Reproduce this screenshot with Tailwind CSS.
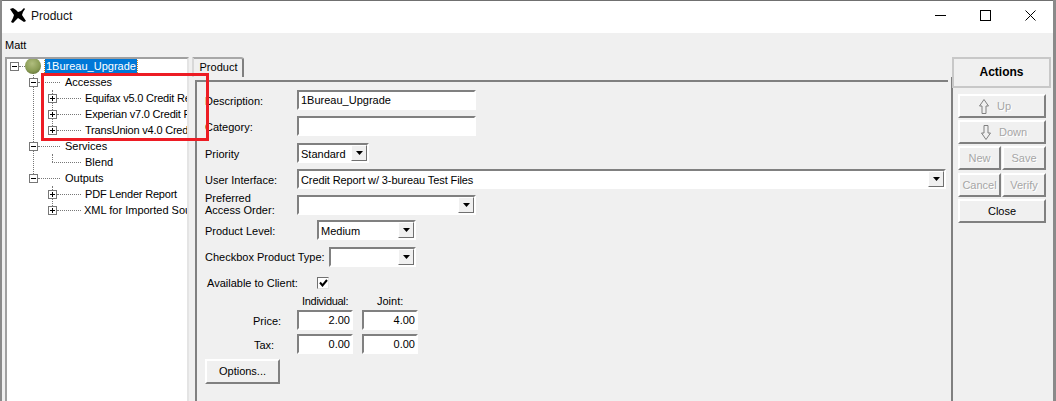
<!DOCTYPE html>
<html lang="en">
<head>
    <meta charset="UTF-8">
    <title>Product</title>
    <script src="https://cdn.jsdelivr.net/npm/@tailwindcss/browser@4"></script>
</head>
<body class="bg-[#8a8a8a] overflow-hidden">
<div class="relative w-[1056px] h-[401px] overflow-hidden font-['Liberation_Sans',Arial,sans-serif] text-[11px] leading-none text-black">
    <div class="w-[1051px] h-[401px] ml-[2px] border-t border-[#707070] bg-[#f0f0f0] flex flex-col">
        <!-- Title bar -->
        <div class="h-[32px] bg-white flex items-center shrink-0">
            <svg class="ml-[8px] -mt-[3px] w-[16px] h-[15px] shrink-0" viewBox="0 0 16 15"><path d="M0 1 3 0 6 2 8 4 11 3 14 0 15 1 13 4 12 7 14 10 16 13 14 14 11 12 8 10 6 12 3 15 1 14 3 10 4 7 2 4Z" fill="#000"/></svg>
            <span class="ml-[5px] -mt-[2px] text-[12px] text-[#111]">Product</span>
            <div class="ml-auto -mt-[3px] flex items-center mr-[17px] gap-[34px]">
                <svg class="w-[11px] h-[11px]" viewBox="0 0 11 11"><path d="M0 5.5H11" stroke="#000"/></svg>
                <svg class="w-[11px] h-[11px]" viewBox="0 0 11 11"><rect x=".5" y=".5" width="10" height="10" fill="none" stroke="#000"/></svg>
                <svg class="w-[11px] h-[11px]" viewBox="0 0 11 11"><path d="M.5.5 10.5 10.5M10.5.5.5 10.5" stroke="#000"/></svg>
            </div>
        </div>
        <div class="h-[24px] shrink-0 pl-[3px] pt-[7px]">Matt</div>

        <div class="flex flex-1 min-h-0">
            <!-- Tree -->
            <div class="relative w-[184px] ml-[3px] shrink-0 bg-white border-t-2 border-l-2 border-t-[#a0a0a0] border-l-[#a0a0a0] border-r-2 border-r-[#e4e4e4] overflow-hidden">
                <!-- tree connectors -->
                <div class="absolute left-[26px] top-[14px] h-[105px] border-l border-dotted border-[#777]"></div>
                <div class="absolute left-[45px] top-[31px] h-[42px] border-l border-dotted border-[#777]"></div>
                <div class="absolute left-[45px] top-[95px] h-[8px] border-l border-dotted border-[#777]"></div>
                <div class="absolute left-[45px] top-[127px] h-[24px] border-l border-dotted border-[#777]"></div>

                <div class="relative flex flex-col -mt-[1px] whitespace-nowrap">
                    <div class="h-[16px] flex items-center pl-[3px]">
                        <span class="w-[9px] h-[9px] border border-[#777] bg-white flex items-center justify-center shrink-0"><span class="w-[5px] h-px bg-black"></span></span>
                        <span class="w-[6px] shrink-0 border-t border-dotted border-[#777]"></span>
                        <span class="w-[16px] h-[16px] rounded-full shrink-0 bg-[radial-gradient(circle_at_45%_35%,#b0bd7e,#8a9c55_55%,#4f5f2c)]"></span>
                        <span class="ml-[4px] h-[15px] px-[1px] shrink-0 flex items-center bg-[#0078d7] text-white outline-1 outline-dotted outline-[#d08a20]">1Bureau_Upgrade</span>
                    </div>
                    <div class="h-[16px] flex items-center pl-[22px]">
                        <span class="w-[9px] h-[9px] border border-[#777] bg-white flex items-center justify-center shrink-0"><span class="w-[5px] h-px bg-black"></span></span>
                        <span class="w-[22px] shrink-0 border-t border-dotted border-[#777]"></span>
                        <span class="ml-[5px]">Accesses</span>
                    </div>
                    <div class="h-[16px] flex items-center pl-[41px]">
                        <span class="relative w-[9px] h-[9px] border border-[#777] bg-white flex items-center justify-center shrink-0"><span class="w-[5px] h-px bg-black"></span><span class="absolute w-px h-[5px] bg-black"></span></span>
                        <span class="w-[24px] shrink-0 border-t border-dotted border-[#777]"></span>
                        <span class="ml-[4px] shrink-0 tracking-[-0.2px]">Equifax v5.0 Credit Report</span>
                    </div>
                    <div class="h-[16px] flex items-center pl-[41px]">
                        <span class="relative w-[9px] h-[9px] border border-[#777] bg-white flex items-center justify-center shrink-0"><span class="w-[5px] h-px bg-black"></span><span class="absolute w-px h-[5px] bg-black"></span></span>
                        <span class="w-[24px] shrink-0 border-t border-dotted border-[#777]"></span>
                        <span class="ml-[4px] shrink-0 tracking-[-0.2px]">Experian v7.0 Credit Report</span>
                    </div>
                    <div class="h-[16px] flex items-center pl-[41px]">
                        <span class="relative w-[9px] h-[9px] border border-[#777] bg-white flex items-center justify-center shrink-0"><span class="w-[5px] h-px bg-black"></span><span class="absolute w-px h-[5px] bg-black"></span></span>
                        <span class="w-[24px] shrink-0 border-t border-dotted border-[#777]"></span>
                        <span class="ml-[4px] shrink-0 tracking-[-0.2px]">TransUnion v4.0 Credit Report</span>
                    </div>
                    <div class="h-[16px] flex items-center pl-[22px]">
                        <span class="w-[9px] h-[9px] border border-[#777] bg-white flex items-center justify-center shrink-0"><span class="w-[5px] h-px bg-black"></span></span>
                        <span class="w-[22px] shrink-0 border-t border-dotted border-[#777]"></span>
                        <span class="ml-[5px]">Services</span>
                    </div>
                    <div class="h-[16px] flex items-center pl-[45px]">
                        <span class="w-[29px] shrink-0 border-t border-dotted border-[#777]"></span>
                        <span class="ml-[4px]">Blend</span>
                    </div>
                    <div class="h-[16px] flex items-center pl-[22px]">
                        <span class="w-[9px] h-[9px] border border-[#777] bg-white flex items-center justify-center shrink-0"><span class="w-[5px] h-px bg-black"></span></span>
                        <span class="w-[22px] shrink-0 border-t border-dotted border-[#777]"></span>
                        <span class="ml-[5px]">Outputs</span>
                    </div>
                    <div class="h-[16px] flex items-center pl-[41px]">
                        <span class="relative w-[9px] h-[9px] border border-[#777] bg-white flex items-center justify-center shrink-0"><span class="w-[5px] h-px bg-black"></span><span class="absolute w-px h-[5px] bg-black"></span></span>
                        <span class="w-[24px] shrink-0 border-t border-dotted border-[#777]"></span>
                        <span class="ml-[4px] shrink-0 tracking-[-0.2px]">PDF Lender Report</span>
                    </div>
                    <div class="h-[16px] flex items-center pl-[41px]">
                        <span class="relative w-[9px] h-[9px] border border-[#777] bg-white flex items-center justify-center shrink-0"><span class="w-[5px] h-px bg-black"></span><span class="absolute w-px h-[5px] bg-black"></span></span>
                        <span class="w-[24px] shrink-0 border-t border-dotted border-[#777]"></span>
                        <span class="ml-[3px] shrink-0">XML for Imported Sources</span>
                    </div>
                </div>
            </div>

            <!-- Tabs and form -->
            <div class="w-[756px] ml-[3px] shrink-0 flex flex-col">
                <div class="w-[52px] h-[20px] shrink-0 pb-[2px] pl-[1px] bg-[#f0f0f0] rounded-tr-[3px] border-t-2 border-l-2 border-r-2 border-t-[#a8a8a8] border-l-[#d8d8d8] border-r-[#808080] flex items-center justify-center">Product</div>
                <div class="flex-1 ml-[3px] mt-[3px] border-t-2 border-l-2 border-[#808080] pl-[8px] pt-[8px] flex flex-col">
                    <div class="h-[20px] flex items-center">
                        <span class="w-[92px] pt-[2px]">Description:</span>
                        <div class="w-[179px] h-[20px] bg-white border-2 border-t-[#808080] border-l-[#808080] border-b-white border-r-white flex items-center pl-[2px]">1Bureau_Upgrade</div>
                    </div>
                    <div class="h-[20px] mt-[6px] flex items-center">
                        <span class="w-[92px] pt-[2px]">Category:</span>
                        <div class="w-[179px] h-[20px] bg-white border-2 border-t-[#808080] border-l-[#808080] border-b-white border-r-white"></div>
                    </div>
                    <div class="h-[20px] mt-[7px] flex items-center">
                        <span class="w-[92px] pt-[2px]">Priority</span>
                        <div class="w-[72px] h-[20px] bg-white border-2 border-t-[#808080] border-l-[#808080] border-b-white border-r-white flex items-center pl-[2px]">
                            <span class="pt-[2px]">Standard</span>
                            <span class="ml-auto w-[16px] h-[16px] bg-[#f0f0f0] border border-white border-r-[#707070] border-b-[#707070] flex items-center justify-center"><svg class="w-[7px] h-[4px]" viewBox="0 0 7 4"><path d="M0 0H7L3.5 4Z"/></svg></span>
                        </div>
                    </div>
                    <div class="h-[20px] mt-[6px] flex items-center">
                        <span class="w-[92px] pt-[2px]">User Interface:</span>
                        <div class="w-[649px] h-[20px] bg-white border-2 border-t-[#808080] border-l-[#808080] border-b-white border-r-white flex items-center pl-[2px]">
                            <span class="pt-[2px] tracking-[-0.1px]">Credit Report w/ 3-bureau Test Files</span>
                            <span class="ml-auto w-[16px] h-[16px] bg-[#f0f0f0] border border-white border-r-[#707070] border-b-[#707070] flex items-center justify-center"><svg class="w-[7px] h-[4px]" viewBox="0 0 7 4"><path d="M0 0H7L3.5 4Z"/></svg></span>
                        </div>
                    </div>
                    <div class="h-[20px] mt-[6px] flex items-center">
                        <span class="w-[92px] leading-[12px] pb-[2px]">Preferred<br>Access Order:</span>
                        <div class="w-[179px] h-[20px] bg-white border-2 border-t-[#808080] border-l-[#808080] border-b-white border-r-white flex items-center">
                            <span class="ml-auto w-[16px] h-[16px] bg-[#f0f0f0] border border-white border-r-[#707070] border-b-[#707070] flex items-center justify-center"><svg class="w-[7px] h-[4px]" viewBox="0 0 7 4"><path d="M0 0H7L3.5 4Z"/></svg></span>
                        </div>
                    </div>
                    <div class="h-[20px] mt-[5px] flex items-center">
                        <span class="w-[112px] pt-[2px]">Product Level:</span>
                        <div class="w-[99px] h-[20px] bg-white border-2 border-t-[#808080] border-l-[#808080] border-b-white border-r-white flex items-center pl-[2px]">
                            <span class="pt-[2px]">Medium</span>
                            <span class="ml-auto w-[16px] h-[16px] bg-[#f0f0f0] border border-white border-r-[#707070] border-b-[#707070] flex items-center justify-center"><svg class="w-[7px] h-[4px]" viewBox="0 0 7 4"><path d="M0 0H7L3.5 4Z"/></svg></span>
                        </div>
                    </div>
                    <div class="h-[20px] mt-[7px] flex items-center">
                        <span class="w-[124px]">Checkbox Product Type:</span>
                        <div class="w-[87px] h-[20px] bg-white border-2 border-t-[#808080] border-l-[#808080] border-b-white border-r-white flex items-center">
                            <span class="ml-auto w-[16px] h-[16px] bg-[#f0f0f0] border border-white border-r-[#707070] border-b-[#707070] flex items-center justify-center"><svg class="w-[7px] h-[4px]" viewBox="0 0 7 4"><path d="M0 0H7L3.5 4Z"/></svg></span>
                        </div>
                    </div>
                    <div class="h-[12px] mt-[10px] flex items-center">
                        <span class="w-[112px] pl-[2px]">Available to Client:</span>
                        <div class="w-[12px] h-[12px] bg-white border border-t-[#707070] border-l-[#707070] border-b-[#e4e4e4] border-r-[#e4e4e4] flex items-center justify-center">
                            <svg class="w-[9px] h-[8px]" viewBox="0 0 9 8"><path d="M1 3.5 3.5 6.5 8 1" fill="none" stroke="#000" stroke-width="2"/></svg>
                        </div>
                    </div>
                    <div class="h-[12px] mt-[6px] flex items-center">
                        <span class="w-[97px]"></span>
                        <span class="w-[75px] tracking-[-0.3px]">Individual:</span>
                        <span>Joint:</span>
                    </div>
                    <div class="h-[20px] mt-[3px] flex items-center">
                        <span class="w-[92px] pl-[48px] pt-[2px]">Price:</span>
                        <div class="w-[56px] h-[20px] pr-[1px] bg-white border-2 border-t-[#808080] border-l-[#808080] border-b-white border-r-white flex items-center justify-end">2.00</div>
                        <div class="w-[56px] h-[20px] pr-[1px] ml-[9px] bg-white border-2 border-t-[#808080] border-l-[#808080] border-b-white border-r-white flex items-center justify-end">4.00</div>
                    </div>
                    <div class="h-[20px] mt-[4px] flex items-center">
                        <span class="w-[92px] pl-[49px] pt-[2px]">Tax:</span>
                        <div class="w-[56px] h-[20px] pr-[1px] bg-white border-2 border-t-[#808080] border-l-[#808080] border-b-white border-r-white flex items-center justify-end">0.00</div>
                        <div class="w-[56px] h-[20px] pr-[1px] ml-[9px] bg-white border-2 border-t-[#808080] border-l-[#808080] border-b-white border-r-white flex items-center justify-end">0.00</div>
                    </div>
                    <div class="w-[75px] h-[25px] mt-[5px] bg-[#f0f0f0] border-2 border-t-white border-l-white border-b-[#808080] border-r-[#808080] flex items-center justify-center">Options...</div>
                </div>
            </div>

            <!-- Actions -->
            <div class="w-[100px] ml-[3px] shrink-0 flex flex-col">
                <div class="h-[31px] ml-[1px] pb-[2px] border-2 border-[#c8c8c8] bg-[#f0f0f0] flex items-center justify-center font-bold text-[12px] z-10">Actions</div>
                <div class="flex-1 mt-[-11px] border-l-2 border-[#808080] pl-[5px] pt-[17px] flex flex-col gap-[2px] text-[#a6a6a6] [text-shadow:1px_1px_0_#fff]">
                    <div class="w-[88px] h-[24px] pl-[19px] bg-[#f0f0f0] border-2 border-t-white border-l-white border-b-[#808080] border-r-[#808080] flex items-center gap-[8px]">
                        <svg class="w-[10px] h-[15px]" viewBox="0 0 10 15"><path d="M5 .5 9.5 7H7V14.5H3V7H.5Z" fill="none" stroke="#808080"/></svg>
                        <span>Up</span>
                    </div>
                    <div class="w-[88px] h-[24px] pl-[21px] bg-[#f0f0f0] border-2 border-t-white border-l-white border-b-[#808080] border-r-[#808080] flex items-center gap-[8px]">
                        <svg class="w-[10px] h-[15px]" viewBox="0 0 10 15"><path d="M5 14.5 9.5 8H7V.5H3V8H.5Z" fill="none" stroke="#808080"/></svg>
                        <span>Down</span>
                    </div>
                    <div class="flex gap-[1px]">
                        <div class="w-[43px] h-[24px] bg-[#f0f0f0] border-2 border-t-white border-l-white border-b-[#808080] border-r-[#808080] flex items-center justify-center">New</div>
                        <div class="w-[44px] h-[24px] bg-[#f0f0f0] border-2 border-t-white border-l-white border-b-[#808080] border-r-[#808080] flex items-center justify-center">Save</div>
                    </div>
                    <div class="flex gap-[1px] mt-[1px]">
                        <div class="w-[43px] h-[24px] bg-[#f0f0f0] border-2 border-t-white border-l-white border-b-[#808080] border-r-[#808080] flex items-center justify-center">Cancel</div>
                        <div class="w-[44px] h-[24px] bg-[#f0f0f0] border-2 border-t-white border-l-white border-b-[#808080] border-r-[#808080] flex items-center justify-center">Verify</div>
                    </div>
                    <div class="w-[88px] h-[24px] bg-[#f0f0f0] border-2 border-t-white border-l-white border-b-[#808080] border-r-[#808080] flex items-center justify-center text-black [text-shadow:none]">Close</div>
                </div>
            </div>
        </div>
    </div>
    <!-- Red annotation box -->
    <div class="absolute left-[41px] top-[73px] w-[168px] h-[68px] border-[3px] border-[#ed1c24]"></div>
</div>
</body>
</html>
